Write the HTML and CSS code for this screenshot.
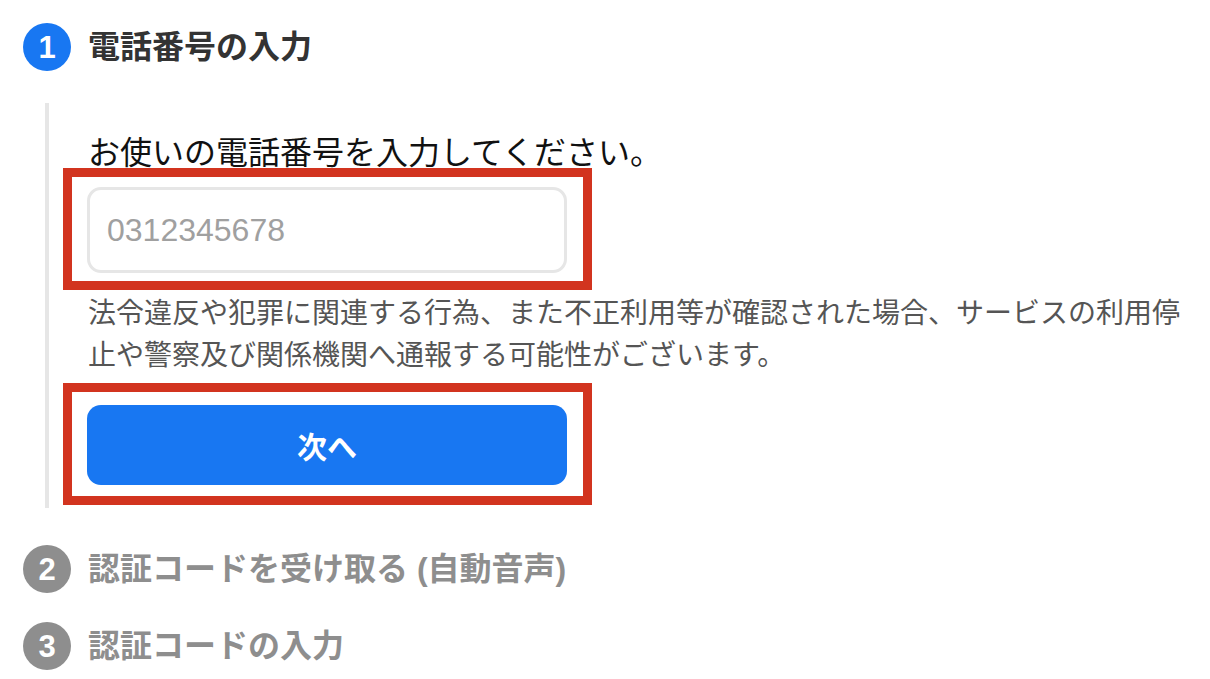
FILE: index.html
```html
<!DOCTYPE html>
<html lang="ja">
<head>
<meta charset="utf-8">
<title>電話番号の入力</title>
<link rel="stylesheet" href="styles.css">
</head>
<body>
<div class="page">
  <div class="step-head active">
    <span class="num">1</span>
    <h2 class="step-title">電話番号の入力</h2>
  </div>
  <div class="step-body">
    <p class="lead">お使いの電話番号を入力してください。</p>
    <div class="mark mark-input">
      <input class="tel" type="tel" placeholder="0312345678">
    </div>
    <p class="note">法令違反や犯罪に関連する行為、また不正利用等が確認された場合、サービスの利用停止や警察及び関係機関へ通報する可能性がございます。</p>
    <div class="mark mark-button">
      <button class="next" type="button">次へ</button>
    </div>
  </div>
  <div class="step-head inactive step2">
    <span class="num">2</span>
    <h2 class="step-title">認証コードを受け取る (自動音声)</h2>
  </div>
  <div class="step-head inactive step3">
    <span class="num">3</span>
    <h2 class="step-title">認証コードの入力</h2>
  </div>
</div>
</body>
</html>
```

FILE: styles.css
```css
html, body {
  margin: 0;
  padding: 0;
  background: #ffffff;
}

body {
  font-family: "Noto Sans CJK JP", "Noto Sans", sans-serif;
  width: 1210px;
  height: 679px;
  overflow: hidden;
}

.page {
  padding: 23px 22px 0 23px;
}

.step-head {
  display: flex;
  align-items: center;
  gap: 17px;
  height: 48px;
}

.num {
  width: 48px;
  height: 48px;
  border-radius: 50%;
  flex: none;
  display: flex;
  align-items: center;
  justify-content: center;
  color: #ffffff;
  font-family: "Liberation Sans", Arial, sans-serif;
  font-weight: 700;
  font-size: 31px;
  line-height: 1;
}

.step-title {
  margin: 0;
  font-family: "Liberation Sans", "Noto Sans CJK JP", sans-serif;
  font-size: 32px;
  font-weight: 700;
  line-height: 48px;
  white-space: nowrap;
}

.active .num {
  background: #1877f2;
}

.active .step-title {
  color: #333333;
}

.inactive .num {
  background: #8e8e8e;
}

.inactive .step-title {
  color: #8e8e8e;
}

.step-body {
  margin: 32px 0 0 22px;
  border-left: 4px solid #e6e6e6;
  padding: 29px 0 3px 39px;
}

.lead {
  margin: 0;
  font-size: 32px;
  line-height: 36px;
  color: #111111;
}

.mark {
  box-sizing: border-box;
  width: 529px;
  margin-left: -25px;
  border: 9px solid #d2341f;
}

.mark-input {
  padding: 10px 16px 8px 15px;
}

.tel {
  display: block;
  box-sizing: border-box;
  width: 480px;
  height: 86px;
  margin: 0;
  border: 3px solid #e6e6e6;
  border-radius: 14px;
  padding: 0 17px;
  font-family: "Liberation Sans", Arial, sans-serif;
  font-size: 32px;
  color: #333333;
  background: #ffffff;
  outline: none;
}

.tel::placeholder {
  color: #a0a0a0;
}

.note {
  margin: 0;
  font-size: 28px;
  line-height: 42px;
  color: #555555;
}

.mark-button {
  margin-top: 9px;
  padding: 13px 16px 11px 15px;
}

.next {
  display: flex;
  align-items: center;
  justify-content: center;
  width: 480px;
  height: 80px;
  margin: 0;
  border: none;
  border-radius: 14px;
  background: #1877f2;
  color: #ffffff;
  font-family: "Noto Sans CJK JP", sans-serif;
  font-size: 30px;
  font-weight: 700;
  padding: 0;
}

.step2 {
  margin-top: 37px;
}

.step3 {
  margin-top: 29px;
}
```
